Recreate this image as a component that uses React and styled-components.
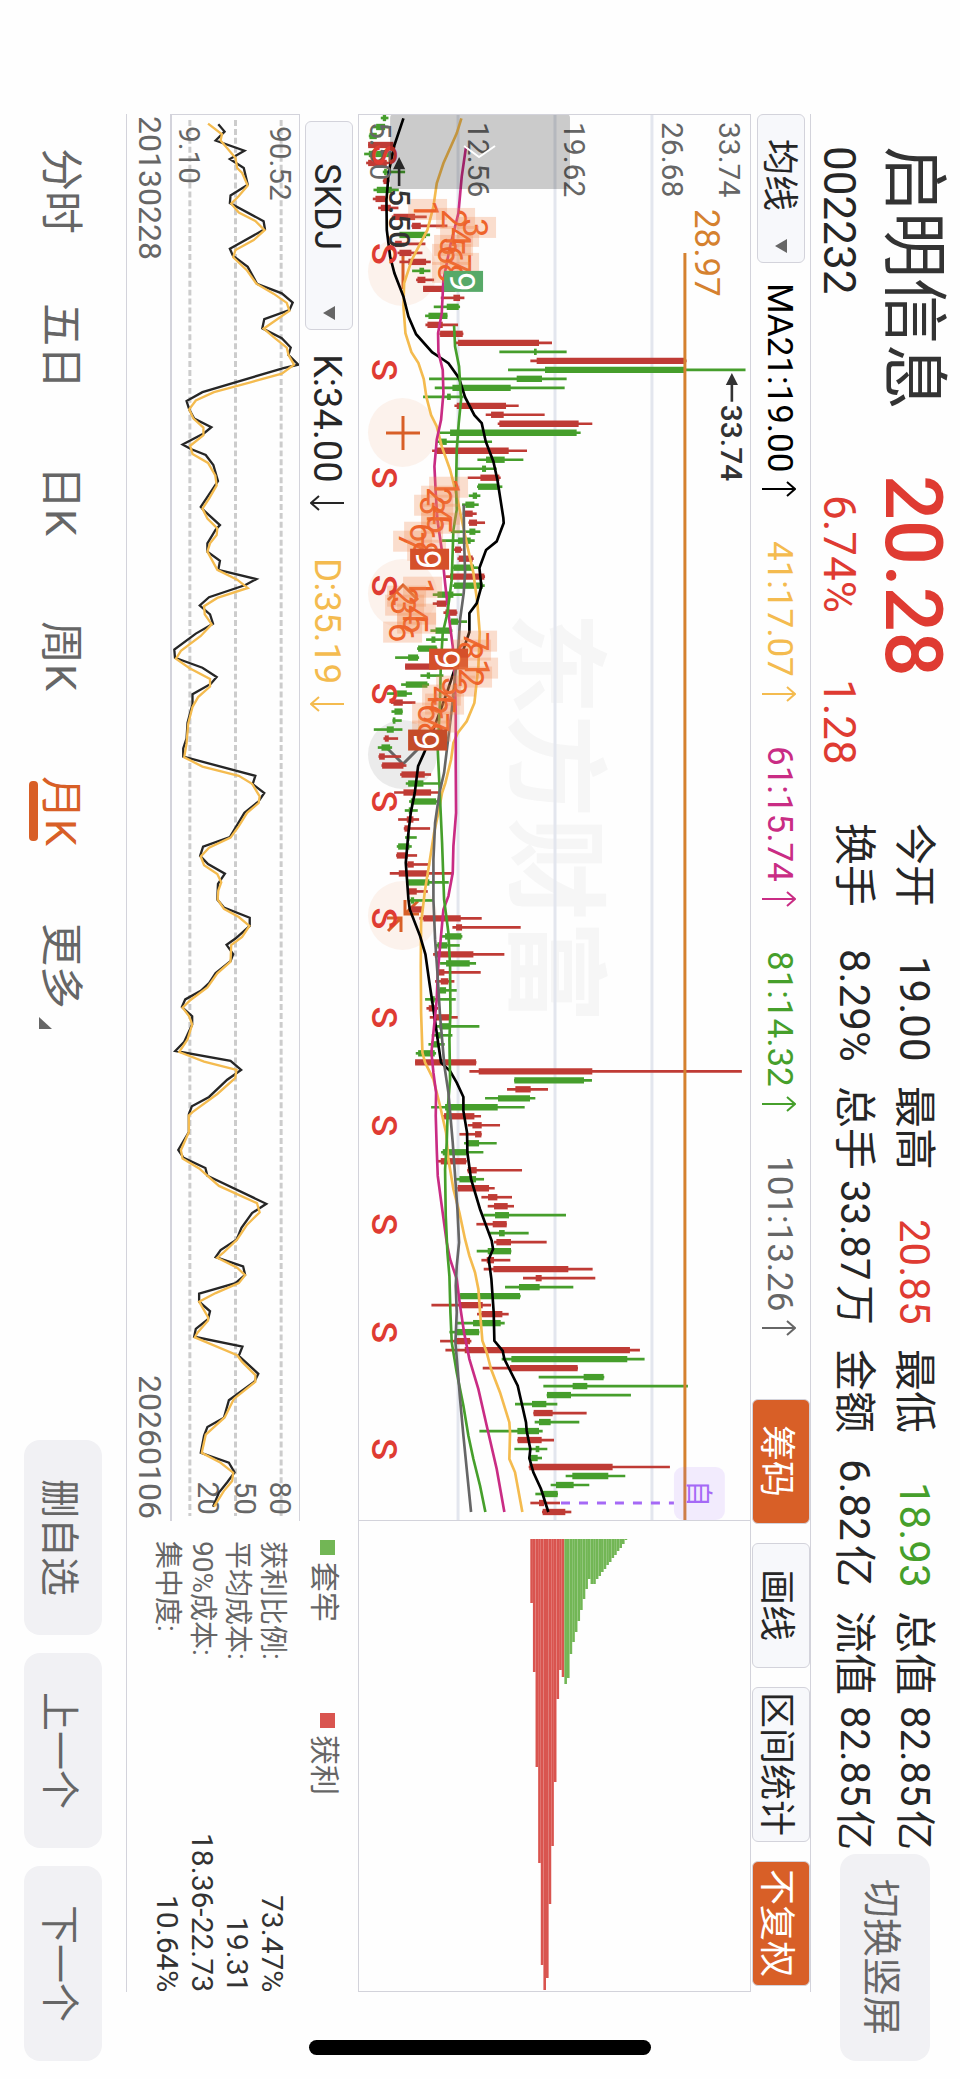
import React, { useState } from 'react';
import styled, { createGlobalStyle, css } from 'styled-components';

const colors = {
  text: '#262626',
  muted: '#666666',
  up: '#df3b32',
  down: '#469f2b',
  accent: '#d85f27',
  gold: '#f4bb4f',
  magenta: '#c92c84',
  purple: '#a569f6',
  line: '#d3d3db',
  grid: '#e3e6ee',
  fill: '#f1f1f4',
  candleUp: '#bf3b35',
  candleDown: '#469e2c',
};

const GlobalStyle = createGlobalStyle`
  * {
    box-sizing: border-box;
  }
  body {
    margin: 0;
    background: #fefefe;
  }
`;

/* The whole screen is landscape: lines run top to bottom, rows go right to left */
const sideways = css`
  writing-mode: vertical-rl;
  text-orientation: sideways;
  font-family: Roboto, 'Noto Sans CJK SC', sans-serif;
`;

const Page = styled.main`
  ${sideways}
  position: relative;
  display: flex;
  flex-direction: column;
  width: 100%;
  height: 100vh;
  min-height: 1900px;
  overflow: hidden;
  color: ${colors.text};
  white-space: nowrap;
`;

const BareButton = styled.button`
  ${sideways}
  margin: 0;
  padding: 0;
  border: 0;
  background: none;
  color: inherit;
  cursor: pointer;
`;

/* ---------- header ---------- */

const Header = styled.header`
  display: flex;
  block-size: 149px;
  padding-inline: 146px 18px;
`;

const NameBlock = styled.div`
  inline-size: 329px;
`;

const QuoteBlock = styled.div`
  inline-size: 348px;
  color: ${colors.up};
`;

const StockName = styled.h1`
  margin: 0;
  font-size: 66px;
  font-weight: 400;
  line-height: 94px;
  color: #333333;
`;

const Price = styled.div`
  font-size: 79px;
  font-weight: 500;
  line-height: 94px;
`;

const SubLine = styled.div`
  display: flex;
  gap: 66px;
  padding-inline-start: ${p => p.$indent || 0}px;
  font-size: 44px;
  line-height: 54px;
`;

const Stats = styled.dl`
  flex: 1;
  display: grid;
  grid-template-columns: repeat(4, 1fr);
  grid-auto-rows: 60px;
  column-gap: 24px;
  margin: 0;
  padding-block-start: 16px;
`;

const Stat = styled.div`
  display: flex;
  justify-content: space-between;
  font-size: 42px;
  line-height: 60px;

  dt,
  dd {
    margin: 0;
  }
  dd {
    color: ${p => p.$color || 'inherit'};
    font-size: ${p => (p.$tight ? 40 : 42)}px;
  }
`;

const Unit = styled.span`
  margin-inline-start: 4px;
`;

const SoftButton = styled(BareButton)`
  inline-size: ${p => p.$length || 195}px;
  block-size: ${p => p.$depth || 78}px;
  border-radius: 16px;
  background: ${colors.fill};
  color: ${colors.muted};
  font-size: 39px;
`;

const SwitchSlot = styled.div`
  padding-block-start: 30px;
  padding-inline-start: 4px;
`;

/* ---------- toolbar ---------- */

const Toolbar = styled.div`
  display: flex;
  align-items: center;
  block-size: 60px;
  margin-inline: 114px 87px;
  border-block-start: 1px solid ${colors.line};
`;

const SelectBox = styled.label`
  position: relative;
  display: flex;
  inline-size: ${p => p.$length}px;
  block-size: 48px;

  svg {
    position: absolute;
    inset-inline-end: 10px;
    inset-block-start: 18px;
    pointer-events: none;
  }
`;

const Select = styled.select`
  ${sideways}
  appearance: none;
  flex: 1;
  margin: 0;
  padding: 0;
  padding-block-start: 4px;
  padding-inline-start: ${p => p.$pad}px;
  border: 1px solid ${colors.line};
  border-radius: 6px;
  background: #f7f8fb;
  color: inherit;
  font-size: 36px;
`;

const Readings = styled.div`
  flex: 1;
  display: flex;
  gap: ${p => p.$gap || 43}px;
  padding-block-start: 4px;
  padding-inline-start: ${p => p.$pad || 20}px;
`;

const Reading = styled.span`
  display: flex;
  align-items: center;
  gap: ${p => p.$gap || 8}px;
  color: ${p => p.$color};
  font-size: ${p => p.$size || 35}px;
  line-height: 48px;

  svg {
    flex: none;
  }
`;

const ToolButton = styled(BareButton)`
  inline-size: ${p => p.$length || 125}px;
  block-size: 58px;
  margin-inline-end: ${p => (p.$last ? 6 : 19)}px;
  padding-block-start: 2px;
  border: 1px solid ${colors.line};
  border-radius: 6px;
  background: ${p => (p.$active ? colors.accent : '#f7f8fb')};
  color: ${p => (p.$active ? '#ffffff' : colors.text)};
  font-size: 36px;
`;

/* ---------- charts ---------- */

const Board = styled.section`
  flex: 1;
  min-block-size: 0;
  display: grid;
  grid-template-columns: minmax(0, 1fr) 471px;
  grid-template-rows: minmax(0, 1fr) 231px;
  margin-inline: 114px 87px;
  border-block-end: 1px solid ${colors.line};
`;

const ChartFrame = styled.div`
  position: relative;
  border: 1px solid ${colors.line};
  min-block-size: 0;
`;

const Chart = styled.svg`
  writing-mode: horizontal-tb;
  position: relative;
  display: block;
  width: 100%;
  height: 100%;
  font-family: Roboto, 'Noto Sans CJK SC', sans-serif;
  pointer-events: none;
`;

const ChipFrame = styled(ChartFrame)`
  border-inline-start: 0;
`;

const Tools = styled.div`
  position: absolute;
  top: 122px;
  left: 9px;
  display: flex;
  gap: 92px;
`;

const RoundTool = styled(BareButton)`
  display: grid;
  place-items: center;
  inline-size: 69px;
  block-size: 69px;
  border-radius: 50%;
  background: ${p => (p.$gray ? '#ebebeb' : '#fcf2ec')};
`;

const Indicator = styled.div`
  display: flex;
  flex-direction: column;
`;

const IndicatorHead = styled.div`
  display: flex;
  align-items: center;
  block-size: 58px;
  padding-inline-start: 7px;
`;

const IndicatorFrame = styled.div`
  block-size: 130px;
  border: 1px solid ${colors.line};
  border-block-end-width: 2px;
  border-inline-end: 0;
`;

const Dates = styled.div`
  display: flex;
  justify-content: space-between;
  flex: 1;
  padding-inline: 2px;
  color: ${colors.muted};
  font-size: 32px;
  line-height: 40px;
`;

const Side = styled.div`
  padding-inline-start: 19px;
  color: ${colors.muted};
`;

const Legend = styled.div`
  display: flex;
  align-items: center;
  block-size: 62px;
  margin-block-end: 6px;
  font-size: 30px;
`;

const LegendItem = styled.span`
  display: flex;
  align-items: center;
  gap: 7px;
  inline-size: 173px;

  &::before {
    content: '';
    inline-size: 15px;
    block-size: 15px;
    background: ${p => p.$color};
  }
`;

const CostTable = styled.table`
  inline-size: 100%;
  border-collapse: collapse;
  line-height: 35px;

  th,
  td {
    block-size: 35px;
    padding: 0;
  }
  th {
    padding-inline-start: 1px;
    font-size: 28px;
    font-weight: 400;
    text-align: start;
  }
  td {
    color: #333333;
    font-size: 30px;
    text-align: end;
  }
`;

/* ---------- footer ---------- */

const Footer = styled.footer`
  display: flex;
  align-items: center;
  justify-content: space-between;
  block-size: 126px;
  padding-inline: 148px 18px;
`;

const Tabs = styled.nav`
  display: flex;
  gap: 69px;
  padding-block-start: 4px;
`;

const Tab = styled(BareButton)`
  position: relative;
  min-inline-size: 86px;
  color: ${p => (p.$active ? colors.accent : colors.muted)};
  font-size: 43px;
  line-height: 60px;

  ${p =>
    p.$active &&
    css`
      &::after {
        content: '';
        position: absolute;
        inset-inline: 13px;
        inset-block-end: -2px;
        block-size: 9px;
        border-radius: 4px;
        background: ${colors.accent};
      }
    `}

  svg {
    position: absolute;
    inset-inline-end: -20px;
    inset-block-end: 8px;
  }
`;

const Actions = styled.div`
  display: flex;
  gap: 18px;
`;

const HomeBar = styled.div`
  position: absolute;
  bottom: 24px;
  left: 50%;
  width: 342px;
  height: 15px;
  margin-left: -171px;
  border-radius: 8px;
  background: #000000;
`;

/* ---------- data ---------- */

const stats = [
  { label: '今开', value: '19.00' },
  { label: '最高', value: '20.85', color: colors.up },
  { label: '最低', value: '18.93', color: colors.down },
  { label: '总值', value: '82.85', unit: '亿', tight: true },
  { label: '换手', value: '8.29%' },
  { label: '总手', value: '33.87', unit: '万', tight: true },
  { label: '金额', value: '6.82', unit: '亿' },
  { label: '流值', value: '82.85', unit: '亿', tight: true },
];

const averages = [
  { text: 'MA21:19.00', color: '#000000' },
  { text: '41:17.07', color: colors.gold },
  { text: '61:15.74', color: colors.magenta },
  { text: '81:14.32', color: colors.down },
  { text: '101:13.26', color: colors.muted },
];

const costs = [
  ['获利比例:', '73.47%'],
  ['平均成本:', '19.31'],
  ['90%成本:', '18.36-22.73'],
  ['集中度:', '10.64%'],
];

const tabs = ['分时', '五日', '日K', '周K', '月K', '更多'];

// One month per entry: low, body start, body end, high. Units are thirds of a pixel.
const candles = `
g 122 128 138 145|g 98 108 135 145|g 86 88 110 122|r 84 84 160 160|g 72 86 150 160|r 78 84 140 150
g 128 132 140 195|r 128 130 142 148|g 100 110 155 176|r 98 106 136 140|r 114 122 152 175|r 155 160 225 260
r 214 216 242 322|g 175 178 258 270|r 155 165 185 256|r 172 178 214 247|r 178 205 258 272|g 216 238 252 271
r 228 232 256 282|r 249 249 345 350|r 302 340 360 373|g 281 320 356 360|g 255 265 322 322|r 256 262 308 354
r 298 300 368 370|r 346 354 597 636|g 478 582 590 680|r 571 590 1035 1040|g 504 615 1035 1217|g 267 530 606 680
g 284 337 512 674|g 249 321 332 370|r 343 350 498 536|r 437 453 491 614|r 473 478 716 757|g 298 330 710 722
g 290 298 320 456|r 276 290 506 561|g 412 438 494 550|g 348 426 438 470|r 383 421 478 482|g 411 414 475 487
g 386 398 411 421|g 366 376 403 416|r 368 372 398 410|r 385 387 411 435|g 332 388 406 421|g 305 354 392 404
r 342 345 363 367|r 352 356 398 401|g 336 340 402 414|r 316 330 433 435|g 337 342 428 434|g 278 292 340 367
r 278 290 318 322|r 310 316 350 352|g 326 332 354 381|g 271 286 334 337|g 258 274 286 323|g 231 234 290 292
g 165 204 234 237|r 195 195 290 300|g 241 260 270 310|g 183 197 262 267|g 140 165 200 216|r 152 160 188 226
g 154 163 187 188|g 157 158 166 185|g 101 140 161 187|r 130 134 146 174|g 113 124 150 156|r 115 117 134 183
r 124 126 190 199|r 180 184 254 273|g 197 204 250 305|r 162 190 273 300|g 207 212 288 292|g 194 206 216 233
r 174 200 220 237|r 191 193 207 270|g 195 200 208 230|g 170 174 208 215|r 168 170 203 231|r 198 202 221 270
r 149 176 266 340|g 200 204 268 326|r 202 206 230 263|g 208 212 222 280|r 208 212 248 250|r 238 250 362 425
r 337 348 366 542|g 300 315 364 367|g 288 292 322 359|r 279 284 400 493|g 300 318 389 408|r 293 296 313 422
r 285 302 325 343|g 290 298 318 350|g 255 272 284 347|r 259 266 284 294|r 269 280 327 353|g 285 298 332 418
g 275 288 302 337|g 265 274 296 314|g 227 234 284 288|r 225 225 408 409|r 388 416 757 1206|g 522 523 732 756
r 501 526 572 624|g 435 474 570 586|g 273 315 473 554|r 308 312 403 423|r 383 397 425 480|r 358 405 424 425
g 372 384 417 470|g 303 308 380 430|r 290 302 378 380|r 381 383 410 546|g 348 358 408 432|r 352 353 447 464
r 424 444 472 516|r 443 462 503 522|g 430 465 507 678|r 409 458 500 500|g 448 477 494 566|r 462 469 513 620
g 410 443 513 514|r 424 440 462 511|r 431 460 685 758|r 549 587 605 766|g 495 537 599 700|g 358 360 540 542
r 274 360 428 453|r 411 424 487 506|g 345 399 482 494|g 328 345 417 418|r 300 345 390 394|r 316 374 870 900
g 485 514 862 914|r 428 510 713 714|g 596 731 791 793|g 610 698 742 1044|g 620 621 693 873|g 525 576 619 652
r 580 581 638 740|g 584 597 632 718|g 418 532 597 608|r 532 533 605 642|g 523 587 598 622|g 564 570 593 606
r 566 568 818 990|g 677 697 805 856|g 632 648 701 748|g 586 606 653 654|r 571 597 612 660|r 606 608 676 694
`
  .trim()
  .split(/[|\n]/)
  .map(row => {
    const [kind, ...v] = row.split(' ');
    const [low, start, end, high] = v.map(Number);
    return { kind, low, start, end, high };
  });

const priceLines = [
  {
    color: colors.gold,
    points:
      '364,55 350,100 310,190 290,250 280,320 262,390 215,480 192,550 190,620 196,700 214,757 235,790 251,838 259,892 273,946 290,980 305,1040 330,1110 348,1180 365,1260 382,1340 400,1420 412,1510 419,1600 415,1700 403,1810 380,1865 353,1900 340,1930 333,1980 316,2050 306,2080 295,2140 282,2200 268,2290 255,2370 243,2470 242,2600 243,2740 247,2860 255,2890 280,2940 300,3020 318,3100 325,3180 340,3270 358,3340 375,3420 388,3470 405,3520 415,3570 420,3640 427,3725 440,3760 453,3810 480,3880 508,3970 510,4000 508,4080 525,4120 547,4239',
  },
  {
    color: '#000000',
    points:
      '190,55 163,135 146,215 139,300 140,390 150,470 163,520 190,590 205,650 228,703 276,757 300,773 325,790 357,835 375,892 403,946 425,970 437,1025 460,1085 472,1140 490,1255 491,1270 470,1325 438,1351 418,1405 424,1460 410,1511 388,1541 388,1597 370,1650 345,1705 322,1775 280,1890 252,1960 234,2000 224,2080 212,2140 205,2200 197,2290 205,2400 209,2430 240,2510 256,2565 268,2650 283,2750 294,2830 303,2890 330,2915 350,2950 370,2993 370,3035 381,3100 382,3160 393,3240 420,3330 455,3425 459,3450 446,3480 454,3540 461,3640 463,3725 488,3755 493,3780 533,3860 558,3970 560,3995 571,4050 568,4077 580,4120 603,4170 625,4239',
  },
  {
    color: colors.magenta,
    points:
      '378,140 365,230 355,340 330,440 310,540 305,640 294,700 295,757 308,810 310,880 303,960 290,1020 283,1100 287,1180 292,1260 305,1350 315,1450 325,1540 338,1640 345,1740 347,1850 347,2000 348,2140 340,2240 338,2320 325,2390 310,2430 300,2540 293,2620 290,2700 280,2800 274,2860 280,2920 288,2980 287,3050 290,3150 293,3230 305,3320 320,3430 330,3480 350,3540 360,3620 372,3700 388,3780 415,3870 440,3980 470,4110 493,4239',
  },
  {
    color: colors.down,
    points:
      '342,677 345,740 357,800 363,900 356,970 350,1050 348,1160 350,1230 340,1290 335,1440 322,1540 308,1600 302,1700 300,1800 293,1950 300,2100 306,2230 312,2400 325,2500 330,2600 331,2740 328,2820 330,2940 323,3030 320,3130 315,3210 317,3350 322,3460 328,3530 331,3640 335,3730 350,3820 370,3920 385,4010 400,4080 420,4160 436,4239',
  },
  {
    color: colors.muted,
    points:
      '371,1215 372,1320 375,1420 371,1480 360,1560 355,1640 345,1730 335,1830 324,1920 312,2020 298,2080 285,2170 280,2280 280,2400 285,2520 292,2620 300,2750 313,2900 325,2980 338,3130 345,3230 352,3330 357,3430 350,3500 347,3560 350,3640 346,3730 352,3800 360,3900 370,4010 380,4110 393,4239',
  },
];

// Nine-count sequences: first y, then the x of each number
const counts = [
  { y: 110, xs: [87, 115, 136, 119, 113, 111, 119, 111, 123], end: '#57a968' },
  { y: 388, xs: [108, 100, 93, 100, 100, 83, 72, 86, 89], end: '#d5502a' },
  { y: 488, xs: [82, 66, 64, 76, 76, 62, 137, 131, 108], end: '#d5502a' },
  { y: 569, xs: [138, 132, 115, 101, 104, 91, 97, 91, 87], end: '#c54c29' },
];

const splits = [55, 154, 270, 378, 486, 594, 702, 819, 918, 1026, 1125, 1233, 1350];

const chips = {
  profit: [64, 133, 228, 324, 426, 451, 439, 365, 307, 243, 160, 131, 138],
  loss: [
    145, 139, 115, 103, 93, 82, 71, 60, 50, 40, 45, 45, 40, 37, 33, 30, 26, 23,
    19, 16, 12, 9, 5, 1,
  ],
};

const kLine =
  '293,58 312,80 285,107 372,138 328,163 370,190 382,241 330,273 328,296 430,351 434,375 328,434 337,455 382,489 410,540 485,569 518,597 508,620 432,647 426,675 485,705 512,733 505,755 535,785 490,795 245,868 197,895 205,920 220,948 272,974 250,992 185,1026 210,1040 255,1058 278,1088 292,1137 240,1215 250,1226 298,1270 285,1284 260,1325 260,1350 298,1378 293,1405 408,1433 375,1451 265,1488 237,1513 268,1540 277,1568 225,1598 160,1646 162,1671 245,1701 288,1729 270,1750 215,1781 215,1812 200,1867 197,1915 187,1945 187,1970 405,2028 397,2053 432,2080 415,2105 372,2140 328,2213 247,2242 238,2270 262,2295 313,2324 292,2355 290,2402 310,2426 388,2457 388,2482 345,2520 318,2539 338,2567 330,2588 285,2624 265,2655 240,2678 193,2704 183,2727 214,2755 214,2780 190,2832 163,2860 330,2890 362,2917 320,2947 265,2999 213,3027 204,3051 204,3105 172,3159 188,3183 254,3214 260,3237 438,3322 395,3350 363,3395 348,3431 300,3462 285,3483 368,3511 374,3537 345,3562 235,3594 235,3618 268,3647 262,3671 225,3700 220,3724 366,3754 355,3782 414,3836 402,3860 325,3916 310,3969 260,3997 250,4023 240,4075 325,4105 342,4134 320,4164 295,4195 277,4238';

const dLine =
  '262,56 304,88 300,107 345,160 350,190 365,205 382,243 355,275 332,298 355,325 405,350 433,378 400,408 345,438 338,460 380,500 408,540 460,570 500,598 508,622 470,648 430,676 465,705 500,733 505,755 522,785 485,812 390,838 280,868 225,893 205,920 218,948 248,975 248,998 208,1030 215,1055 262,1082 284,1120 288,1150 265,1190 245,1220 260,1250 290,1280 288,1300 268,1325 260,1350 290,1405 350,1435 382,1460 290,1490 250,1515 252,1540 273,1570 240,1605 180,1650 165,1674 205,1702 268,1735 268,1758 232,1790 215,1820 202,1870 197,1930 190,1972 245,2000 355,2028 395,2052 418,2090 415,2110 380,2140 355,2180 330,2215 265,2245 240,2272 250,2298 290,2325 302,2350 293,2375 291,2402 310,2430 355,2455 387,2482 365,2515 332,2540 330,2590 290,2625 260,2668 210,2705 185,2729 205,2755 214,2780 200,2825 175,2863 250,2892 348,2917 344,2942 290,2990 215,3045 204,3055 204,3105 180,3160 185,3185 235,3215 295,3268 410,3320 418,3348 380,3385 350,3430 310,3468 290,3485 350,3515 374,3538 355,3562 285,3592 235,3618 262,3665 262,3675 230,3712 222,3726 350,3780 365,3800 405,3840 405,3860 340,3912 312,3968 255,4020 243,4075 300,4105 338,4135 335,4160 310,4190 280,4238';

/* ---------- pieces ---------- */

const Label = ({ x, y, size = 30, fill = colors.muted, children, ...rest }) => (
  <text
    transform={`translate(${x} ${y}) rotate(90)`}
    fontSize={size}
    fill={fill}
    {...rest}>
    {children}
  </text>
);

const Arrow = ({ down }) => (
  <svg width="34" height="18" viewBox="0 0 34 18" fill="none" stroke="currentColor" strokeWidth="2">
    {down ? <path d="M34 9H1M9 2L1 9l8 7" /> : <path d="M0 9h33M25 2l8 7-8 7" />}
  </svg>
);

const Caret = () => (
  <svg width="12" height="14" viewBox="0 0 12 14">
    <path d="M12 0v14L0 7z" fill={colors.muted} />
  </svg>
);

const toolIcons = [
  { name: '缩小', path: 'M25 8v34' },
  { name: '放大', path: 'M25 8v34M8 25h34' },
  { name: '左移', path: 'M10 31L25 16l15 15' },
  { name: '右移', path: 'M10 19l15 15 15-15', gray: true },
  { name: '收起', path: 'M27 9v14h14M28 22L40 10M9 27h14v14M22 28L10 40' },
];

const PriceChart = () => (
  <ChartFrame>
    <Tools>
      {toolIcons.map(tool => (
        <RoundTool key={tool.name} type="button" aria-label={tool.name} $gray={tool.gray}>
          <svg width="50" height="50" fill="none" stroke={tool.gray ? colors.muted : colors.accent} strokeWidth="3">
            <path d={tool.path} />
          </svg>
        </RoundTool>
      ))}
    </Tools>
    <Chart viewBox="19 15 391 1406">
      <Label x={178} y={512} size={103} fill="#f6f6f6" fontWeight="700">
        东方财富
      </Label>
      {[118, 215, 312].map(x => (
        <path key={x} d={`M${x} 15V1421`} stroke={colors.grid} strokeWidth="3" />
      ))}
      <g transform="scale(0.33333)">
        {candles.map((c, i) => {
          const y = (i + 2) * 27;
          const stroke = c.kind === 'r' ? colors.candleUp : colors.candleDown;
          return (
            <g key={i} stroke={stroke}>
              <path d={`M${c.low} ${y}H${c.high}`} strokeWidth="8" />
              <path d={`M${c.start} ${y}H${c.end}`} strokeWidth="19" />
            </g>
          );
        })}
        {priceLines.map(line => (
          <polyline key={line.color} points={line.points} fill="none" stroke={line.color} strokeWidth="8" />
        ))}
      </g>
      <path d="M345 153V1421" stroke="#d5812f" strokeWidth="3" />
      <Label x={379} y={22}>33.74</Label>
      <Label x={322} y={22}>26.68</Label>
      <Label x={224} y={22}>19.62</Label>
      <Label x={128} y={22}>12.56</Label>
      <Label x={30} y={22}>5.50</Label>
      <Label x={355} y={109} size={35} fill="#d5812f">28.97</Label>
      {counts.map(seq =>
        seq.xs.map((x, i) => {
          const y = seq.y + i * 9;
          const last = i === 8;
          return (
            <g key={`${seq.y}-${i}`}>
              <rect
                x={x - 19}
                y={y - 11}
                width="39"
                height="21"
                fill={last ? seq.end : '#f08850'}
                fillOpacity={last ? 1 : 0.28}
              />
              <Label x={x - 13} y={y} size={35} fill={last ? '#ffffff' : '#ee632b'} textAnchor="middle">
                {i + 1}
              </Label>
            </g>
          );
        })
      )}
      {splits.map(y => (
        <Label key={y} x={32} y={y} size={36} fill={colors.up} fontWeight="500" textAnchor="middle">
          S
        </Label>
      ))}
      <g fill="#333333" stroke="#333333" strokeWidth="2.6">
        <path d="M392 302v-20M388 284l4-8 4 8z" />
        <path d="M59 86v-20M55 68l4-8 4 8z" />
      </g>
      <Label x={381} y={305} fill="#333333" fontWeight="500">33.74</Label>
      <Label x={49} y={89} fill="#333333" fontWeight="500">5.50</Label>
      <path d="M50 89V18q0-4 4-4H226q4 0 4 4V89z" fill="#000000" fillOpacity="0.2" />
      <path d="M124 46l15 11 16-11" fill="none" stroke="#ffffff" strokeWidth="2" />
      <rect x="334" y="1368" width="51" height="53" rx="9" fill={colors.purple} fillOpacity="0.13" />
      <path d="M334 1404H218" stroke={colors.purple} strokeWidth="3" strokeDasharray="9 9" strokeDashoffset="4" />
      <Label x={349} y={1381} size={27} fill={colors.purple}>自</Label>
    </Chart>
  </ChartFrame>
);

const ChipChart = () => (
  <ChipFrame>
    <Chart viewBox="19 1422 391 470">
      {[...chips.profit, ...chips.loss].map((length, i) => (
        <rect
          key={i}
          x={190.3 + i * 2.62}
          y="1440"
          width="2.6"
          height={length}
          fill={i < chips.profit.length ? '#d9544f' : '#72b655'}
        />
      ))}
    </Chart>
  </ChipFrame>
);

const SkdjChart = () => (
  <IndicatorFrame>
    <Chart viewBox="51 15 128 1407">
      {[69, 115, 161].map(x => (
        <path key={x} d={`M${x} 15V1422`} stroke="#cccccc" strokeWidth="3" strokeDasharray="6 3" />
      ))}
      <Label x={150} y={21}>90.52</Label>
      <Label x={58} y={21}>9.10</Label>
      <Label x={150} y={1421} textAnchor="end">80</Label>
      <Label x={114} y={1421} textAnchor="end">50</Label>
      <Label x={77} y={1421} textAnchor="end">20</Label>
      <g transform="scale(0.33333)" fill="none" strokeWidth="7">
        <polyline points={kLine} stroke={colors.text} />
        <polyline points={dLine} stroke={colors.gold} />
      </g>
    </Chart>
  </IndicatorFrame>
);

const App = () => {
  const [tab, setTab] = useState('月K');

  return (
    <>
      <GlobalStyle />
      <Page>
        <Header>
          <NameBlock>
            <StockName>启明信息</StockName>
            <SubLine>002232</SubLine>
          </NameBlock>
          <QuoteBlock>
            <Price>20.28</Price>
            <SubLine $indent={20}>
              <span>6.74%</span>
              <span>1.28</span>
            </SubLine>
          </QuoteBlock>
          <Stats>
            {stats.map(s => (
              <Stat key={s.label} $color={s.color} $tight={s.tight}>
                <dt>{s.label}</dt>
                <dd>
                  {s.value}
                  {s.unit && <Unit>{s.unit}</Unit>}
                </dd>
              </Stat>
            ))}
          </Stats>
          <SwitchSlot>
            <SoftButton type="button" $length={207} $depth={90}>
              切换竖屏
            </SoftButton>
          </SwitchSlot>
        </Header>

        <Toolbar>
          <SelectBox $length={149}>
            <Select aria-label="主图指标" $pad={24}>
              <option>均线</option>
            </Select>
            <Caret />
          </SelectBox>
          <Readings>
            {averages.map(a => (
              <Reading key={a.text} $color={a.color}>
                {a.text}
                <Arrow />
              </Reading>
            ))}
          </Readings>
          <ToolButton type="button" $active>筹码</ToolButton>
          <ToolButton type="button">画线</ToolButton>
          <ToolButton type="button" $length={155}>区间统计</ToolButton>
          <ToolButton type="button" $active $last>不复权</ToolButton>
        </Toolbar>

        <Board>
          <PriceChart />
          <ChipChart />
          <Indicator>
            <IndicatorHead>
              <SelectBox $length={209}>
                <Select aria-label="副图指标" $pad={41}>
                  <option>SKDJ</option>
                </Select>
                <Caret />
              </SelectBox>
              <Readings $pad={24} $gap={46}>
                <Reading $color={colors.text} $size={38} $gap={11}>
                  K:34.00
                  <Arrow down />
                </Reading>
                <Reading $color={colors.gold} $size={37} $gap={11}>
                  D:35.19
                  <Arrow down />
                </Reading>
              </Readings>
            </IndicatorHead>
            <SkdjChart />
            <Dates>
              <span>20130228</span>
              <span>20260106</span>
            </Dates>
          </Indicator>
          <Side>
            <Legend>
              <LegendItem $color="#72b655">套牢</LegendItem>
              <LegendItem $color="#d9544f">获利</LegendItem>
            </Legend>
            <CostTable>
              <tbody>
                {costs.map(([label, value]) => (
                  <tr key={label}>
                    <th scope="row">{label}</th>
                    <td>{value}</td>
                  </tr>
                ))}
              </tbody>
            </CostTable>
          </Side>
        </Board>

        <Footer>
          <Tabs>
            {tabs.map(t => (
              <Tab key={t} type="button" $active={t === tab} onClick={() => setTab(t)}>
                {t}
                {t === '更多' && (
                  <svg width="13" height="12" viewBox="0 0 13 12">
                    <path d="M0 0v12h13z" fill={colors.muted} />
                  </svg>
                )}
              </Tab>
            ))}
          </Tabs>
          <Actions>
            <SoftButton type="button">删自选</SoftButton>
            <SoftButton type="button">上一个</SoftButton>
            <SoftButton type="button">下一个</SoftButton>
          </Actions>
        </Footer>
        <HomeBar />
      </Page>
    </>
  );
};

export default App;
